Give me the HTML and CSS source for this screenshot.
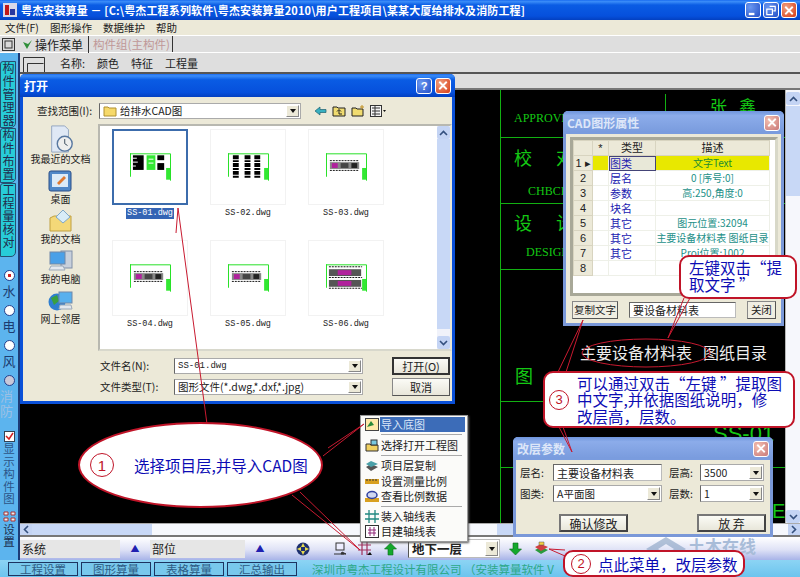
FILE: index.html
```html
<!DOCTYPE html>
<html lang="zh-CN">
<head>
  <meta charset="UTF-8"/>
  <title>粤杰安装算量</title>
  <link rel="stylesheet" href="styles.css">
</head>
<body>

<!-- shared thumbnails -->
<svg class="defs" width="0" height="0">
  <symbol id="sheet-a" viewBox="0 0 42 28">
    <path d="M0 .5H41.500V28M.5 0V24" fill="none" stroke="#22e022"/>
    <rect x="3" y="2" width="11" height="15" fill="#000"/>
    <path d="M3 5h4M3 9h5M3 13h3" stroke="#fff"/>
    <rect x="17" y="2" width="9" height="15" fill="#33e833"/>
    <path d="M19 6h5M19 10h5" stroke="#fff"/>
    <rect x="28" y="2" width="7" height="5" fill="#000"/>
    <rect x="28" y="10" width="7" height="7" fill="#000"/>
    <rect x="37" y="15" width="4" height="12" fill="#33e833"/>
  </symbol>
  <symbol id="sheet-b" viewBox="0 0 42 28">
    <path d="M0 .5H41.500V28M.5 0V24" fill="none" stroke="#22e022"/>
    <path d="M8 2v24M20 2v24M30 2v24" stroke="#000" stroke-width="6" stroke-dasharray="4 1 2 1"/>
    <rect x="37" y="15" width="4" height="12" fill="#33e833"/>
  </symbol>
  <symbol id="sheet-c" viewBox="0 0 42 28">
    <path d="M0 .5H41.500V28M.5 0V24" fill="none" stroke="#22e022"/>
    <path d="M4 7.500h30M4 17.500h30" stroke="#111" stroke-dasharray="2 1"/>
    <rect x="4" y="9" width="30" height="7" fill="#888"/>
    <rect x="6" y="10" width="6" height="5" fill="#b0209c"/>
    <rect x="15" y="10" width="8" height="5" fill="#444"/>
    <rect x="26" y="10" width="6" height="5" fill="#222"/>
    <rect x="37" y="15" width="4" height="12" fill="#33e833"/>
  </symbol>
  <symbol id="sheet-d" viewBox="0 0 42 28">
    <path d="M0 .5H41.500V28M.5 0V24" fill="none" stroke="#22e022"/>
    <path d="M3 2.500h34M3 13.500h34M3 24.500h34" stroke="#111" stroke-dasharray="2 1"/>
    <rect x="3" y="5" width="33" height="7" fill="#555"/>
    <rect x="3" y="16" width="33" height="7" fill="#555"/>
    <rect x="12" y="6" width="14" height="5" fill="#b0209c"/>
    <rect x="12" y="17" width="14" height="5" fill="#b0209c"/>
    <rect x="37" y="15" width="4" height="12" fill="#33e833"/>
  </symbol>
</svg>

<div class="app">

  <div class="titlebar">
    <svg class="app-icon" width="14" height="14" viewBox="0 0 14 14"><rect width="14" height="14" fill="#d8d8e8"/><rect x="2" y="2" width="4" height="10" fill="#c01818"/><rect x="7" y="6" width="5" height="6" fill="#2838a0"/></svg>
    <span class="title-text">粤杰安装算量 － [C:\粤杰工程系列软件\粤杰安装算量2010\用户工程项目\某某大厦给排水及消防工程]</span>
    <span class="win-btn blue"><svg width="15" height="15" viewBox="0 0 15 15"><rect x="3" y="10" width="6" height="2.5" fill="#fff"/></svg></span>
    <span class="win-btn blue"><svg width="15" height="15" viewBox="0 0 15 15"><path d="M6 3h6v5h-2M3 6h6v6H3z" fill="none" stroke="#fff" stroke-width="1.3"/></svg></span>
    <span class="win-btn red"><svg width="15" height="15" viewBox="0 0 15 15"><path d="M3.5 3.5l8 8M11.5 3.5l-8 8" stroke="#fff" stroke-width="2"/></svg></span>
  </div>

  <div class="menubar">
    <span>文件(F)</span><span>图形操作</span><span>数据维护</span><span>帮助</span>
  </div>

  <div class="tabrow">
    <span class="tab-grip"><svg width="13" height="13" viewBox="0 0 13 13"><rect x="0.5" y="0.5" width="12" height="12" fill="#d8d8d8" stroke="#333"/><rect x="3" y="3" width="7" height="7" fill="none" stroke="#333"/></svg></span>
    <svg class="tab-check" width="11" height="11" viewBox="0 0 11 11"><path d="M1 3l4 7 5-9-4 4z" fill="#2f8f3a"/></svg>
    <span class="tab-on">操作菜单</span>
    <span class="tab-off">构件组(主构件)</span>
  </div>

  <div class="shell">
    <div class="sidebar">
      <div class="side-tab tall">构件管理器</div>
      <div class="side-tab mid">构件布置</div>
      <div class="side-tab long">工程量核对</div>
      <div class="radios">
        <div class="radio checked"><i></i>水</div>
        <div class="radio"><i></i>电</div>
        <div class="radio"><i></i>风</div>
        <div class="radio gray"><i></i>消防</div>
      </div>
      <div class="show-check"><svg width="11" height="11" viewBox="0 0 11 11"><rect x="0.5" y="0.5" width="10" height="10" fill="#fff" stroke="#345"/><path d="M2 5l3 3 4-6" fill="none" stroke="#d02020" stroke-width="1.5"/></svg>显示构件图</div>
      <div class="side-set"><svg width="13" height="13" viewBox="0 0 13 13"><path d="M1 2h4v3H1zM8 2h4v3H8zM1 8h4v3H1zM8 8h4v3H8z" fill="#eee" stroke="#a33"/></svg>设置</div>
    </div>

    <div class="right">
      <div class="fieldrow">
        <svg class="field-box" width="22" height="15" viewBox="0 0 22 15"><path d="M.5 15V.5h21V15M4.500 15V6.500h16" fill="none" stroke="#333"/></svg>
        <span>名称:</span><span>颜色</span><span>特征</span><span>工程量</span>
      </div>
      <div class="graybar"></div>

      <div class="canvas">
        <svg class="cad" width="765" height="433" viewBox="20 90 765 433">
          <path d="M500.5 90V523M500 137.500H785M500 203.500H785M500 269.500H785M500 401.500H785M500 467.500H785M665.500 94V137" stroke="#12b012" fill="none"/>
          <g fill="#14c814" font-family="'Noto Sans CJK SC',sans-serif">
            <text x="514" y="122" font-size="12" font-family="'Liberation Serif',serif">APPROVE</text>
            <text x="710" y="113" font-size="17" letter-spacing="12">张鑫</text>
            <text x="514" y="165" font-size="18" letter-spacing="24">校对</text>
            <text x="528" y="195" font-size="12" font-family="'Liberation Serif',serif">CHBCK</text>
            <text x="514" y="230" font-size="18" letter-spacing="24">设计</text>
            <text x="526" y="256" font-size="12" font-family="'Liberation Serif',serif">DESIGN</text>
            <text x="515" y="383" font-size="18">图</text>
            <text x="713" y="441" font-size="22" font-family="'Liberation Sans',sans-serif">SS-01</text>
            <text x="772" y="518" font-size="20" font-family="'Liberation Sans',sans-serif">E</text>
          </g>
          <text x="580" y="359" fill="#eeeeee" font-size="16" font-family="'Noto Sans CJK SC',sans-serif">主要设备材料表<tspan x="703">图纸目录</tspan></text>
        </svg>
        <div class="vscroll">
          <span class="sb-btn"><svg width="9" height="6" viewBox="0 0 9 6"><path d="M1 5l3.5-3.5L8 5" fill="none" stroke="#34507e" stroke-width="1.6"/></svg></span>
          <span class="sb-thumb"></span>
          <span class="sb-btn"><svg width="9" height="6" viewBox="0 0 9 6"><path d="M1 1l3.5 3.5L8 1" fill="none" stroke="#34507e" stroke-width="1.6"/></svg></span>
        </div>
      </div>

      <div class="hscroll">
        <span class="hs-btn"><svg width="6" height="9" viewBox="0 0 6 9"><path d="M5 1L1.500 4.500 5 8" fill="none" stroke="#34507e" stroke-width="1.6"/></svg></span>
        <span class="hs-thumb"></span>
        <span class="hs-fill"></span>
        <span class="hs-thumb small"></span>
        <span class="hs-fill small"></span>
        <span class="hs-btn"><svg width="6" height="9" viewBox="0 0 6 9"><path d="M1 1l3.500 3.500L1 8" fill="none" stroke="#34507e" stroke-width="1.6"/></svg></span>
      </div>

      <div class="toolbar">
        <span class="tb-field">系统</span><span class="tb-up">▲</span>
        <span class="tb-field narrow">部位</span><span class="tb-up">▲</span>
        <svg class="tb-target" width="14" height="14" viewBox="0 0 14 14"><circle cx="7" cy="7" r="6.500" fill="#1c2f70"/><path d="M7 1l2 4H5zM7 13l2-4H5zM1 7l4-2v4zM13 7L9 5v4z" fill="#e8dc50"/></svg>
        <svg class="tb-screen" width="13" height="13" viewBox="0 0 13 13"><rect x="2" y="1" width="8" height="7" fill="#eef" stroke="#333"/><path d="M0 12h10M8 10l4 2H7z" stroke="#333" fill="#333"/></svg>
        <svg class="tb-axis" width="14" height="15" viewBox="0 0 14 15"><path d="M4 1v13M9 1v13M0 4h13M0 9h13" stroke="#a0305c" stroke-width="1.2"/><path d="M9 14l3-3 2 3z" fill="#111"/></svg>
        <svg class="tb-arrow" width="13" height="14" viewBox="0 0 13 14"><path d="M6.500 1L12.500 7H9v6H4V7H.5z" fill="#14a82c" stroke="#0a6a18" stroke-width=".6"/></svg>
        <span class="tb-select">地下一层<b class="combo-btn"><i></i></b></span>
        <svg class="tb-arrow down" width="13" height="14" viewBox="0 0 13 14"><path d="M6.500 13L12.500 7H9V1H4v6H.5z" fill="#14a82c" stroke="#0a6a18" stroke-width=".6"/></svg>
        <svg class="tb-stack" width="15" height="15" viewBox="0 0 15 15"><path d="M1 9l6-3 7 3-7 4z" fill="#2a9a3c"/><path d="M1 6l6-3 7 3-7 4z" fill="#d04040"/><path d="M5 1h5v3H5z" fill="#f4d040" stroke="#555" stroke-width=".5"/></svg>
      </div>
    </div>
  </div>

  <div class="statusbar">
    <span class="st-tab">工程设置</span>
    <span class="st-tab">图形算量</span>
    <span class="st-tab">表格算量</span>
    <span class="st-tab">汇总输出</span>
    <span class="st-info">深圳市粤杰工程设计有限公司 （安装算量软件 V</span>
  </div>

  <!-- watermark -->
  <div class="watermark"><svg width="42" height="26" viewBox="0 0 42 26"><path d="M21 1L41 13 21 25 1 13zM21 8l-8 5 8 5 8-5z" fill="#8ca4c4" fill-opacity=".65" fill-rule="evenodd"/></svg><span>土木在线</span></div>

  <!-- open file window -->
  <div class="win open-win">
    <div class="win-title">
      <span class="win-name">打开</span>
      <span class="win-btn blue"><svg width="15" height="15" viewBox="0 0 15 15"><text x="4" y="12" font-size="12" font-weight="700" fill="#fff" font-family="'Liberation Sans',sans-serif">?</text></svg></span>
      <span class="win-btn red"><svg width="15" height="15" viewBox="0 0 15 15"><path d="M3.5 3.5l8 8M11.5 3.5l-8 8" stroke="#fff" stroke-width="2"/></svg></span>
    </div>
    <div class="open-body">
      <div class="look-row">
        <span class="look-label">查找范围(I):</span>
        <span class="combo look-combo">
          <svg width="14" height="12" viewBox="0 0 14 12"><path d="M1 2h4l1 1h7v8H1z" fill="#f6d96a" stroke="#b09030"/></svg>
          给排水CAD图<b class="combo-btn"><i></i></b>
        </span>
        <span class="look-tools">
          <svg width="13" height="12" viewBox="0 0 13 12"><path d="M1 6l5-4v2.500h6v3H6V10z" fill="#38b0c0" stroke="#1c6070" stroke-width=".7"/></svg>
          <svg width="14" height="12" viewBox="0 0 14 12"><path d="M1 2h4l1 1h7v8H1z" fill="#f0dc70" stroke="#222"/><path d="M7 9V5M5 6.500L7 4.500 9 6.500M7 9h3" stroke="#222" fill="none"/></svg>
          <svg width="14" height="12" viewBox="0 0 14 12"><path d="M1 3h4l1 1h6v7H1z" fill="#f0dc70" stroke="#222"/><path d="M11 0v4M9 2h4" stroke="#c09020"/></svg>
          <svg width="16" height="12" viewBox="0 0 16 12"><rect x="0.5" y="0.5" width="11" height="11" fill="#f4f4f4" stroke="#333"/><path d="M2 3h8M2 6h8M2 9h8M5 1v10" stroke="#333"/><path d="M13 5h3l-1.500 2z" fill="#111"/></svg>
        </span>
      </div>
      <div class="open-main">
        <div class="places">
          <div class="place">
            <svg width="30" height="30" viewBox="0 0 30 30"><path d="M5 1h14l4 4v24H5z" fill="#dfe8f5" stroke="#90a4c0"/><circle cx="19" cy="20" r="8" fill="#eee" stroke="#5878a0" stroke-width="1.500"/><path d="M19 15v5l3 2" stroke="#345" fill="none"/></svg>
            我最近的文档
          </div>
          <div class="place">
            <svg width="26" height="24" viewBox="0 0 26 24"><rect x="1" y="2" width="22" height="20" rx="2" fill="#5088c8" stroke="#2a4e88"/><rect x="4" y="5" width="16" height="13" fill="#dcebf8"/><path d="M9 14l7-7 2 2-7 7z" fill="#e07a30"/></svg>
            桌面
          </div>
          <div class="place">
            <svg width="24" height="24" viewBox="0 0 24 24"><path d="M1 22V9l4-2h17v15z" fill="#f4d878" stroke="#c0a040"/><path d="M7 8l7-7 7 7-7 6z" fill="#d8ecf8" stroke="#80a8c8"/></svg>
            我的文档
          </div>
          <div class="place">
            <svg width="26" height="24" viewBox="0 0 26 24"><rect x="13" y="2" width="11" height="17" fill="#c8d0dc" stroke="#8090a8"/><rect x="2" y="3" width="15" height="12" fill="#4aa0e8" stroke="#7088a8"/><path d="M3 17h12l2 4H1z" fill="#e4e8ee" stroke="#9aa8b8"/></svg>
            我的电脑
          </div>
          <div class="place">
            <svg width="26" height="24" viewBox="0 0 26 24"><circle cx="9" cy="13" r="8.500" fill="#2f7fd0"/><path d="M3 9l6-3 2 6-5 4z" fill="#3aa040"/><rect x="11" y="3" width="13" height="11" fill="#58b0ee" stroke="#7088a8"/><path d="M12 16h11l1 4H11z" fill="#e4e8ee" stroke="#9aa8b8"/></svg>
            网上邻居
          </div>
        </div>
        <div class="filelist">
          <div class="thumbs">
            <div class="file sel"><span class="thumb"><svg width="41" height="28"><use href="#sheet-a"/></svg></span><span class="fname">SS-01.dwg</span></div>
            <div class="file"><span class="thumb"><svg width="41" height="28"><use href="#sheet-b"/></svg></span><span class="fname">SS-02.dwg</span></div>
            <div class="file"><span class="thumb"><svg width="41" height="28"><use href="#sheet-c"/></svg></span><span class="fname">SS-03.dwg</span></div>
            <div class="file"><span class="thumb"><svg width="41" height="28"><use href="#sheet-c"/></svg></span><span class="fname">SS-04.dwg</span></div>
            <div class="file"><span class="thumb"><svg width="41" height="28"><use href="#sheet-c"/></svg></span><span class="fname">SS-05.dwg</span></div>
            <div class="file"><span class="thumb"><svg width="41" height="28"><use href="#sheet-d"/></svg></span><span class="fname">SS-06.dwg</span></div>
          </div>
          <div class="list-scroll">
            <span class="sb-btn"><svg width="9" height="6" viewBox="0 0 9 6"><path d="M1 5l3.500-3.500L8 5" fill="none" stroke="#34507e" stroke-width="1.6"/></svg></span>
            <span class="list-thumb"></span>
            <span class="sb-btn"><svg width="9" height="6" viewBox="0 0 9 6"><path d="M1 1l3.500 3.500L8 1" fill="none" stroke="#34507e" stroke-width="1.6"/></svg></span>
          </div>
        </div>
      </div>
      <div class="open-foot">
        <span class="foot-label">文件名(N):</span>
        <span class="combo foot-combo mono">SS-01.dwg<b class="combo-btn"><i></i></b></span>
        <span class="btn default">打开(O)</span>
        <span class="foot-label">文件类型(T):</span>
        <span class="combo foot-combo">图形文件(*.dwg,*.dxf,*.jpg)<b class="combo-btn"><i></i></b></span>
        <span class="btn">取消</span>
      </div>
    </div>
  </div>

  <!-- cad properties window -->
  <div class="win faded cad-win">
    <div class="win-title">
      <span class="win-name">CAD图形属性</span>
      <span class="win-btn red"><svg width="15" height="15" viewBox="0 0 15 15"><path d="M3.5 3.5l8 8M11.5 3.5l-8 8" stroke="#fff" stroke-width="2"/></svg></span>
    </div>
    <div class="cad-body">
      <div class="grid-box">
        <table class="prop-grid">
          <tr class="head"><th></th><th>*</th><th>类型</th><th>描述</th></tr>
          <tr class="cur"><th>1 ▸</th><td></td><td class="k focus">图类</td><td class="v">文字Text</td></tr>
          <tr><th>2</th><td></td><td class="k">层名</td><td class="v">0 [序号:0]</td></tr>
          <tr><th>3</th><td></td><td class="k">参数</td><td class="v">高:250,角度:0</td></tr>
          <tr><th>4</th><td></td><td class="k">块名</td><td class="v"></td></tr>
          <tr><th>5</th><td></td><td class="k">其它</td><td class="v">图元位置:32094</td></tr>
          <tr><th>6</th><td></td><td class="k">其它</td><td class="v">主要设备材料表 图纸目录</td></tr>
          <tr><th>7</th><td></td><td class="k">其它</td><td class="v">Proj位置:1002</td></tr>
          <tr><th>8</th><td></td><td></td><td></td></tr>
        </table>
      </div>
      <div class="cad-foot">
        <span class="btn plain">复制文字</span>
        <span class="text-in">要设备材料表</span>
        <span class="btn plain">关闭</span>
      </div>
    </div>
  </div>

  <!-- layer params window -->
  <div class="win faded layer-win">
    <div class="win-title">
      <span class="win-name">改层参数</span>
      <span class="win-btn red"><svg width="15" height="15" viewBox="0 0 15 15"><path d="M3.5 3.5l8 8M11.5 3.5l-8 8" stroke="#fff" stroke-width="2"/></svg></span>
    </div>
    <div class="layer-body">
      <div class="layer-form">
        <span>层名:</span><span class="text-in lf-wide">主要设备材料表</span>
        <span>层高:</span><span class="combo lf-narrow">3500<b class="combo-btn"><i></i></b></span>
        <span>图类:</span><span class="combo lf-wide">A平面图<b class="combo-btn"><i></i></b></span>
        <span>层数:</span><span class="combo lf-narrow">1<b class="combo-btn"><i></i></b></span>
      </div>
      <div class="layer-foot">
        <span class="btn wide">确认修改</span>
        <span class="btn wide">放 弃</span>
      </div>
    </div>
  </div>

  <!-- popup menu -->
  <div class="popup">
    <div class="pm-item on"><svg width="14" height="13" viewBox="0 0 14 13"><rect x="0.5" y="0.5" width="13" height="12" fill="#ffe9a8" stroke="#444"/><path d="M2 9l4-6 3 4z" fill="#2a8a3a"/></svg><span>导入底图</span></div>
    <hr>
    <div class="pm-item"><svg width="14" height="13" viewBox="0 0 14 13"><path d="M1 5h4l1 1h7v6H1z" fill="#f0d060" stroke="#333"/><rect x="6" y="1" width="6" height="5" fill="#78c8e0" stroke="#333"/></svg><span>选择打开工程图</span></div>
    <hr>
    <div class="pm-item"><svg width="14" height="13" viewBox="0 0 14 13"><path d="M1 8l5-3 7 3-7 4z" fill="#555"/><path d="M1 5l5-3 7 3-7 3z" fill="#4aa0a8"/></svg><span>项目层复制</span></div>
    <div class="pm-item"><svg width="14" height="13" viewBox="0 0 14 13"><rect x="0" y="4" width="14" height="5" fill="#d8a020"/><path d="M2 4v2M5 4v2M8 4v2M11 4v2" stroke="#333"/></svg><span>设置测量比例</span></div>
    <div class="pm-item"><svg width="14" height="13" viewBox="0 0 14 13"><rect x="0" y="8" width="14" height="4" fill="#d8a020"/><ellipse cx="7" cy="5" rx="5" ry="3.500" fill="#d0d8f0" stroke="#3040a0" stroke-width="1.5"/></svg><span>查看比例数据</span></div>
    <hr>
    <div class="pm-item"><svg width="14" height="13" viewBox="0 0 14 13"><path d="M4 0v13M10 0v13M0 4h14M0 9h14" stroke="#208880" stroke-width="1.3"/></svg><span>装入轴线表</span></div>
    <div class="pm-item"><svg width="14" height="13" viewBox="0 0 14 13"><rect x="0.5" y="0.5" width="13" height="12" fill="#fff" stroke="#333"/><path d="M5 2v9M9 2v9M3 5h8M3 8h8" stroke="#902878"/></svg><span>目建轴线表</span></div>
  </div>

  <!-- red pointer lines -->
  <svg class="pointers" width="800" height="577" viewBox="0 0 800 577">
    <g fill="none" stroke="#c81a30" stroke-width="1">
      <path d="M207 424L178 208L176 233"/>
      <path d="M323 456L364 424L328 448"/>
      <path d="M292 495L360 550L300 492"/>
      <path d="M690 298L668 338L684 298"/>
      <path d="M566 372L583 320L558 372"/>
      <path d="M559 427L572 452L563 427"/>
      <path d="M565 556L549 549L565 550"/>
      <ellipse cx="646" cy="353" rx="64" ry="14"/>
    </g>
  </svg>

  <!-- callouts -->
  <div class="oval-note">
    <span class="num">1</span>
    <span>选择项目层,并导入CAD图</span>
  </div>
  <div class="note note-dbl">左键双击“提取文字 ”</div>
  <div class="note note-three">
    <span class="num big">3</span>
    <span class="note-copy">可以通过双击“左键 ”提取图<br>中文字,并依据图纸说明，修<br>改层高，层数。</span>
  </div>
  <div class="note note-two"><span class="num">2</span> 点此菜单，改层参数</div>

</div>
</body>
</html>
```

FILE: styles.css
```css
* {
  margin: 0; padding: 0;
  box-sizing: border-box;
}

body {
  background: #000;
  font-family: "Noto Sans CJK SC", sans-serif;
  font-size: 11px;
  color: #222;
}

.defs { position: absolute; }

.app {
  position: relative;
  width: 800px;
  height: 577px;
  overflow: hidden;
  display: flex;
  flex-direction: column;
  background: #dcdcdc;
}

/* title bars */
.titlebar {
  height: 20px;
  display: flex;
  align-items: center;
  gap: 2px;
  padding: 0 3px;
  color: #fff;
  background: linear-gradient(#1a6cf0, #3a8cf8 8%, #0a5ce4 25%, #0650dc 80%, #0340c0);
}

.app-icon { margin-right: 2px; }

.title-text {
  flex: 1;
  font-size: 11px;
  font-weight: 700;
  white-space: nowrap;
  letter-spacing: 0.15px;
}

.win-btn {
  width: 16px;
  height: 16px;
  border: 1px solid #fff;
  border-radius: 3px;
  display: flex;
  align-items: center;
  justify-content: center;
}
.win-btn.blue { background: radial-gradient(circle at 30% 30%, #6a98f0, #2450c8); }
.win-btn.red { background: radial-gradient(circle at 30% 30%, #f0a080, #d83c14); }

.menubar {
  height: 16px;
  display: flex;
  align-items: center;
  gap: 11px;
  padding-left: 5px;
  background: #ece9d8;
  border-bottom: 1px solid #fff;
  font-size: 10.5px;
}

.tabrow {
  height: 17px;
  display: flex;
  align-items: center;
  background: #dedede;
  border-bottom: 1px solid #fff;
  font-size: 12px;
}

.tab-grip { width: 22px; padding-left: 2px; display: flex; }
.tab-check { margin-right: 2px; }
.tab-on { padding-right: 5px; border-right: 1px solid #333; }
.tab-off { padding: 0 2px 0 4px; color: #c09898; border-right: 1px solid #333; font-size: 11.5px; }

.shell { flex: 1; min-height: 0; display: flex; }

.right { flex: 1; min-width: 0; display: flex; flex-direction: column; }

.fieldrow {
  height: 21px;
  display: flex;
  align-items: center;
  gap: 12px;
  padding-left: 3px;
  background: #dedede;
  border-bottom: 2px solid #555;
  font-size: 11px;
}
.field-box { align-self: flex-end; margin-right: 3px; }

.graybar { height: 16px; background: #dedede; border-bottom: 2px solid #777; }

/* left strip */
.sidebar {
  width: 20px;
  flex: none;
  padding-top: 8px;
  background: #5cb4ee;
  border-right: 2px solid #1c3c78;
  display: flex;
  flex-direction: column;
  align-items: flex-start;
  font-size: 12px;
}

.side-tab {
  width: 16px;
  writing-mode: vertical-rl;
  text-orientation: upright;
  background: #28ccd8;
  border: 1px solid #245070;
  border-radius: 3px 0 5px 0;
  font-size: 12px;
  line-height: 14px;
  letter-spacing: 1px;
  color: #222c4c;
  text-align: start;
}
.side-tab.tall { height: 67px; }
.side-tab.mid { height: 55px; }
.side-tab.long { height: 74px; }

.radios { margin-top: 13px; display: flex; flex-direction: column; gap: 7px; width: 18px; }

.radio {
  display: flex;
  flex-direction: column;
  align-items: center;
  font-size: 13px;
  line-height: 15px;
  color: #1c3c70;
}
.radio i {
  width: 11px;
  height: 11px;
  margin-bottom: 2px;
  border-radius: 50%;
  background: #fff;
  border: 1.5px solid #24408c;
}
.radio.checked i { background: radial-gradient(circle, #d02020 22%, #fff 30%); }
.radio.gray { color: #9cc0e4; }
.radio.gray i { background: #c8c8d8; }

.show-check, .side-set {
  width: 18px;
  display: flex;
  flex-direction: column;
  align-items: center;
  font-size: 11.5px;
  line-height: 12.5px;
  text-align: center;
}
.show-check { margin-top: 13px; color: #2c5488; }
.side-set { margin-top: 5px; color: #1c3050; }

/* cad canvas */
.canvas {
  flex: 1;
  min-height: 0;
  display: flex;
  justify-content: flex-end;
  position: relative;
  background: #000;
}

.cad { position: absolute; left: 0; top: 0; }

.vscroll {
  width: 15px;
  display: flex;
  flex-direction: column;
  padding-top: 2px;
  background: #f6f7fc;
  border-left: 1px solid #b8b8b8;
}
.sb-btn {
  flex: none;
  height: 13px;
  background: #c4d4f4;
  display: flex;
  align-items: center;
  justify-content: center;
  border-radius: 2px;
}
.sb-thumb { flex: 0 0 90px; margin-top: 1px; background: #c8d8f6; }
.vscroll .sb-btn:last-child { margin-top: auto; }

.hscroll {
  height: 14px;
  flex: none;
  display: flex;
  background: #f6f8fd;
  border-top: 1px solid #aaa;
  border-bottom: 2px solid #777;
}
.hs-btn {
  width: 12px;
  background: #c4d4f4;
  display: flex;
  align-items: center;
  justify-content: center;
}
.hs-thumb { width: 120px; background: #c8d8f6; }
.hs-thumb.small { width: 16px; }
.hs-fill { width: 345px; }
.hs-fill.small { flex: 1; }

/* bottom bars */
.toolbar {
  height: 23px;
  flex: none;
  display: flex;
  align-items: center;
  background: linear-gradient(#fff, #dfe2f6 55%, #a8b4e8);
  font-size: 12px;
}

.tb-field {
  width: 100px;
  height: 18px;
  padding-left: 2px;
  background: #e6e6e6;
  line-height: 18px;
}
.tb-field.narrow { width: 95px; }
.tb-up { width: 30px; text-align: center; color: #2020b0; font-size: 9px; }

.tb-target { margin-left: 21px; }
.tb-screen { margin-left: 24px; }
.tb-axis { margin-left: 11px; }
.tb-arrow { margin-left: 12px; }
.tb-arrow.down { margin-left: 9px; }
.tb-stack { margin-left: 12px; }

.tb-select {
  margin-left: 11px;
  width: 92px;
  height: 19px;
  padding-left: 3px;
  background: #fff;
  border: 1px solid #bbb;
  border-left-color: #555;
  font-size: 12.5px;
  font-weight: 700;
  line-height: 17px;
  position: relative;
}

.statusbar {
  height: 17px;
  flex: none;
  display: flex;
  align-items: center;
  gap: 3px;
  padding-left: 8px;
  background: linear-gradient(#8cd4f4, #6cc4ee);
  font-size: 11.5px;
}

.st-tab {
  width: 70px;
  height: 14px;
  line-height: 12px;
  text-align: center;
  color: #2e5c84;
  background: #78c8ec;
  border: 1px solid #1c3460;
}

.st-info { margin-left: 12px; color: #2ca888; white-space: nowrap; }

.watermark {
  position: absolute;
  left: 645px;
  top: 536px;
  display: flex;
  align-items: flex-start;
  gap: 1px;
  font-size: 17px;
  line-height: 20px;
  font-weight: 700;
  color: #a8bcd8;
}

/* windows on the screen */
.win {
  position: absolute;
  display: flex;
  flex-direction: column;
  background: #ece9d8;
  border: 3px solid #0a50d8;
  border-top: none;
  border-radius: 5px 5px 0 0;
  z-index: 2;
}

.win-title {
  height: 23px;
  flex: none;
  margin: 0 -3px;
  padding: 0 4px;
  display: flex;
  align-items: center;
  gap: 3px;
  color: #fff;
  font-size: 12px;
  font-weight: 700;
  background: linear-gradient(#1a6cf0, #3a8cf8 8%, #0a5ce4 25%, #0650dc 80%, #0340c0);
  border-radius: 5px 5px 0 0;
}
.win-name { flex: 1; }

.win.faded { border-color: #7a98d8; }
.win.faded .win-title { background: linear-gradient(#6e94dc, #8cacea 20%, #7a9cde 90%); color: #dde6f8; }
.win.faded .win-btn.red { background: radial-gradient(circle at 30% 30%, #f4c0b0, #c87878); }

.open-win { left: 20px; top: 74px; width: 435px; height: 330px; }

.open-body { flex: 1; display: flex; flex-direction: column; min-height: 0; }

.look-row {
  height: 27px;
  flex: none;
  display: flex;
  align-items: center;
  font-size: 10.5px;
}
.look-label { width: 76px; padding-left: 14px; white-space: nowrap; }
.look-combo { width: 202px; height: 16px; }
.look-tools { margin-left: 13px; display: flex; align-items: center; gap: 5px; }

.combo {
  position: relative;
  display: flex;
  align-items: center;
  gap: 3px;
  padding-left: 3px;
  background: #fff;
  border: 1px solid #aaa;
  border-left-color: #666;
  white-space: nowrap;
  overflow: hidden;
  font-size: 10.5px;
}

.combo-btn {
  position: absolute;
  right: 1px;
  top: 1px;
  bottom: 1px;
  width: 13px;
  background: #ece9d8;
  border: 1px solid;
  border-color: #fff #888 #888 #fff;
  display: flex;
  align-items: center;
  justify-content: center;
}
.combo-btn i {
  border: 3px solid transparent;
  border-top: 4px solid #111;
  border-bottom: none;
}

.open-main { flex: 1; min-height: 0; display: flex; }

.places {
  width: 75px;
  padding-top: 1px;
  display: flex;
  flex-direction: column;
  font-size: 10px;
}
.place {
  height: 40px;
  display: flex;
  flex-direction: column;
  align-items: center;
  justify-content: flex-end;
  line-height: 12px;
  white-space: nowrap;
}

.filelist {
  flex: 1;
  display: flex;
  background: #fff;
  border: 2px solid #b8b8b0;
  border-right-color: #ece9d8;
  border-bottom-color: #d8d8cc;
}

.thumbs {
  flex: 1;
  display: grid;
  grid-template-columns: repeat(3, 98px);
  grid-auto-rows: 111px;
  padding: 3px 0 0 11px;
}

.file { display: flex; flex-direction: column; align-items: center; width: 78px; }

.thumb {
  width: 76px;
  height: 76px;
  display: flex;
  align-items: center;
  justify-content: center;
  border: 1px solid #f2f2f2;
}
.file.sel .thumb { border: 2px solid #3c6cac; }

.fname {
  margin-top: 3px;
  padding: 0 1px;
  font-family: "Liberation Mono", monospace;
  font-size: 8.5px;
  line-height: 11px;
  color: #222;
}
.file.sel .fname { background: #3464b4; color: #fff; }

.list-scroll { width: 13px; display: flex; flex-direction: column; background: #f0f2fa; }
.list-thumb { flex: 0 0 190px; background: #c8d8f6; }
.list-scroll .sb-btn:last-child { margin-top: auto; }

.open-foot {
  height: 50px;
  flex: none;
  padding: 6px 3px 0 0;
  display: grid;
  grid-template-columns: 151px 189px 87px;
  grid-template-rows: 17px 17px;
  row-gap: 4px;
  font-size: 10.5px;
  align-items: center;
}
.foot-label { padding-left: 77px; white-space: nowrap; }
.foot-combo { height: 16px; }
.foot-combo.mono { font-family: "Liberation Mono", monospace; font-size: 9px; }
.open-foot .btn { margin-left: 29px; width: 58px; }

.btn {
  display: flex;
  align-items: center;
  justify-content: center;
  height: 18px;
  background: linear-gradient(#fbfbf6, #e8e6da);
  border: 1px solid #888;
  border-right-color: #555;
  border-bottom-color: #555;
  font-size: 11px;
  white-space: nowrap;
}
.btn.default { border: 2px solid #333; }

/* cad props window */
.cad-win { left: 563px; top: 111px; width: 221px; height: 215px; }

.cad-body { flex: 1; display: flex; flex-direction: column; padding: 3px 3px 0 4px; min-height: 0; }

.grid-box {
  flex: 1;
  min-height: 0;
  background: #fff;
  border: 3px solid #a8a898;
  border-right-color: #d8d8c8;
}

.prop-grid {
  width: 197px;
  border-collapse: collapse;
  table-layout: fixed;
  font-size: 10px;
}
.prop-grid tr { height: 15px; }
.prop-grid th {
  background: #ece9d8;
  border: 1px solid #d8d4c0;
  font-family: "Liberation Sans", "Noto Sans CJK SC", sans-serif;
  font-weight: 400;
  font-size: 11px;
  line-height: 14px;
}
.prop-grid .head th:nth-child(1) { width: 19px; }
.prop-grid .head th:nth-child(2) { width: 16px; }
.prop-grid .head th:nth-child(3) { width: 47px; }
.prop-grid td { border: 1px solid #eef0e8; line-height: 14px; white-space: nowrap; overflow: hidden; }
.prop-grid .k { color: #2020b0; padding-left: 1px; font-size: 11px; }
.prop-grid .v { color: #1c9088; text-align: center; }
.prop-grid .cur td { background: #e8e800; }
.prop-grid .cur .k { background: #e8e8d8; outline: 1px solid #447; outline-offset: -1px; }
.prop-grid .cur .v { color: #208c30; }

.cad-foot {
  height: 27px;
  flex: none;
  display: flex;
  align-items: center;
  gap: 11px;
  padding: 0 2px;
}
.btn.plain { width: 46px; padding: 0 2px; font-size: 10.5px; background: #f0eee2; }
.cad-foot .btn.plain:last-child { width: 30px; }

.text-in {
  display: flex;
  align-items: center;
  height: 16px;
  padding-left: 3px;
  background: #fff;
  border: 1px solid #bbb;
  border-left-color: #666;
  border-top-color: #666;
  font-size: 11px;
  white-space: nowrap;
}
.cad-foot .text-in { width: 110px; }

/* layer window */
.layer-win { left: 513px; top: 437px; width: 260px; height: 100px; }

.layer-body { flex: 1; padding: 3px 3px 0 4px; min-height: 0; display: flex; flex-direction: column; }

.layer-form {
  display: grid;
  grid-template-columns: 33px 109px 38px 64px;
  grid-auto-rows: 19px;
  row-gap: 2px;
  align-items: center;
  font-size: 10.5px;
}
.layer-form span:nth-child(3) { margin-left: 7px; }
.layer-form span:nth-child(7) { margin-left: 7px; }
.lf-narrow, .lf-wide { height: 17px; }

.layer-foot {
  display: flex;
  justify-content: space-between;
  padding: 11px 1px 0 39px;
}
.btn.wide { width: 69px; height: 18px; font-size: 12px; border: 2px solid #777; border-right-color: #444; border-bottom-color: #444; }

/* popup */
.popup {
  position: absolute;
  left: 360px;
  top: 415px;
  width: 108px;
  height: 127px;
  padding: 1px 2px;
  background: #fbfbf9;
  border: 1px solid #999;
  box-shadow: 1px 1px 2px #555;
  font-size: 11px;
  z-index: 3;
}
.popup hr { border: none; border-top: 1px solid #aaa; margin: 1px 3px 1px 18px; }
.pm-item { height: 15.5px; display: flex; align-items: center; gap: 1px; padding-left: 2px; white-space: nowrap; }
.pm-item span { flex: 1; padding-left: 1px; line-height: 15px; }
.pm-item.on span { background: #3c6cb8; color: #dce8f8; }
.popup hr:nth-of-type(1) { margin-bottom: 3px; }
.popup hr:nth-of-type(2) { margin: 2px 3px 2px 18px; }
.popup hr:nth-of-type(3) { margin: 1px 3px 2px 18px; }

.pointers { position: absolute; left: 0; top: 0; z-index: 4; pointer-events: none; }

/* callouts */
.oval-note {
  position: absolute;
  left: 78px;
  top: 422px;
  width: 245px;
  height: 86px;
  display: flex;
  align-items: center;
  gap: 20px;
  padding-left: 10px;
  background: #fff;
  border: 2px solid #c01428;
  border-radius: 50%;
  color: #0c0cb4;
  font-size: 15.5px;
  white-space: nowrap;
  z-index: 5;
}

.num {
  width: 24px;
  height: 24px;
  flex: none;
  display: inline-flex;
  align-items: center;
  justify-content: center;
  border: 1px solid #c01428;
  border-radius: 50%;
  color: #c01428;
  font-size: 15px;
  font-family: "Liberation Sans", sans-serif;
}

.note {
  position: absolute;
  background: #fff;
  border: 2px solid #c01428;
  border-radius: 10px;
  color: #0c0cb4;
  z-index: 5;
}

.note-dbl {
  left: 679px;
  top: 255px;
  width: 118px;
  height: 44px;
  padding: 2px 0 0 8px;
  font-size: 15.5px;
  line-height: 17px;
}

.note-three {
  left: 543px;
  top: 371px;
  width: 252px;
  height: 57px;
  display: flex;
  align-items: center;
  gap: 8px;
  padding-left: 4px;
}
.num.big { width: 20px; height: 20px; font-size: 13px; }
.note-copy { font-size: 15.5px; line-height: 16.5px; white-space: nowrap; }

.note-two {
  left: 563px;
  top: 550px;
  width: 182px;
  height: 27px;
  display: flex;
  align-items: center;
  gap: 7px;
  padding-left: 6px;
  font-size: 15.5px;
  white-space: nowrap;
}
.note-two .num { width: 20px; height: 20px; font-size: 13px; }
```
